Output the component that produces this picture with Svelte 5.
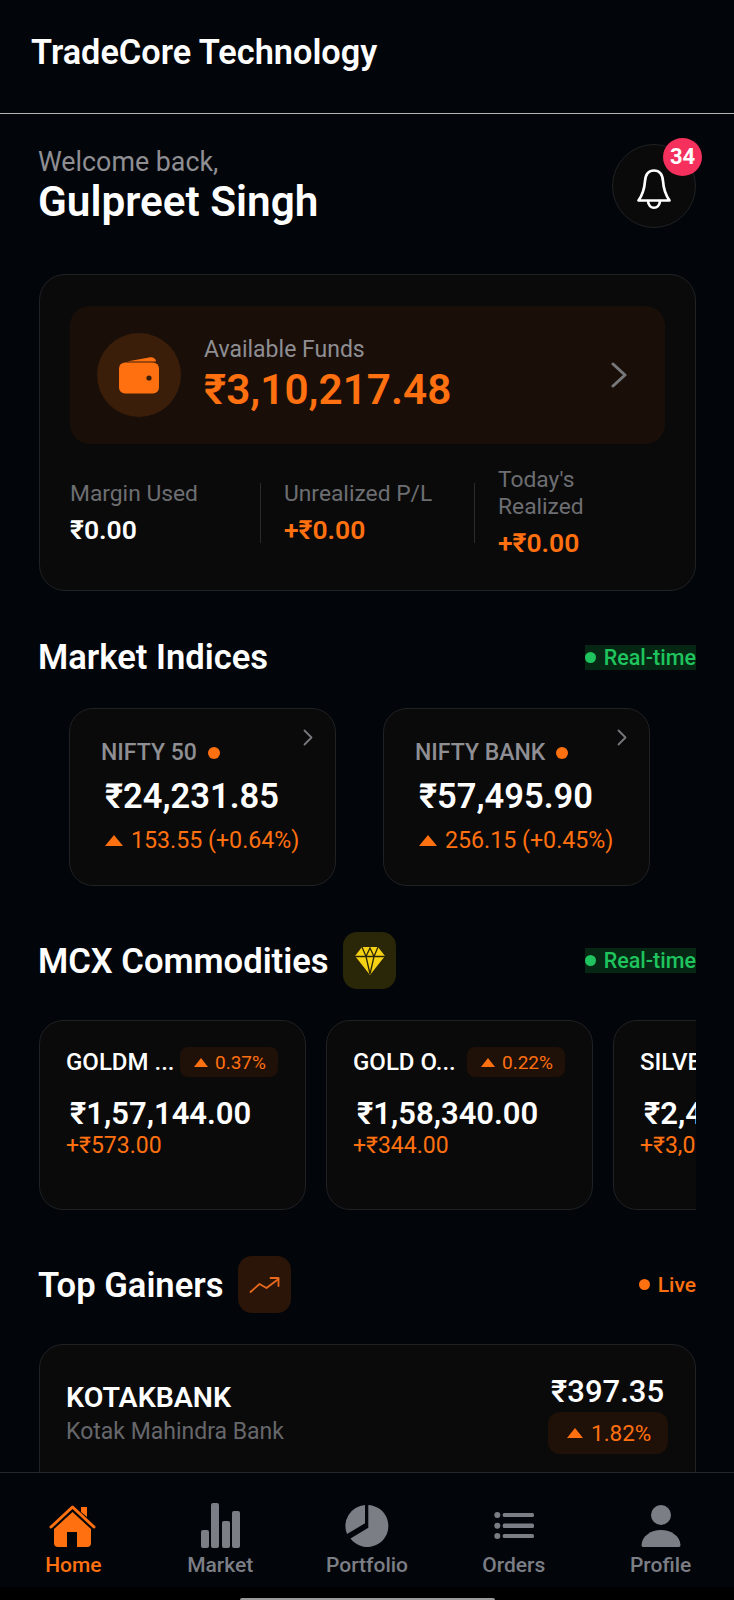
<script>
  const indices = [
    { name: 'NIFTY 50', value: '₹24,231.85', change: '153.55 (+0.64%)' },
    { name: 'NIFTY BANK', value: '₹57,495.90', change: '256.15 (+0.45%)' }
  ];
  const commodities = [
    { name: 'GOLDM ...', pct: '0.37%', value: '₹1,57,144.00', delta: '+₹573.00' },
    { name: 'GOLD O...', pct: '0.22%', value: '₹1,58,340.00', delta: '+₹344.00' },
    { name: 'SILVER...', pct: '1.24%', value: '₹2,41,850.00', delta: '+₹3,020.00' }
  ];
</script>

<div class="phone">
  <header class="top"><h1>TradeCore Technology</h1></header>

  <main class="content">
    <section class="greet">
      <div>
        <p class="welcome">Welcome back,</p>
        <p class="user">Gulpreet Singh</p>
      </div>
      <div class="bell">
        <svg width="40" height="44" viewBox="0 0 40 44" fill="none" stroke="#fff" stroke-width="2.700" stroke-linejoin="round" stroke-linecap="round">
          <path d="M20 3.500C14 3.500 11.500 8 11 14C10.500 22 9 27 4.500 33.500H35.500C31 27 29.500 22 29 14C28.500 8 26 3.500 20 3.500Z" />
          <path d="M14 34C14.500 43 25.500 43 26 34" />
        </svg>
        <span class="badge">34</span>
      </div>
    </section>

    <section class="card funds">
      <div class="funds-main">
        <div class="wallet">
          <svg width="40" height="38" viewBox="0 0 40 38">
            <path fill="#ff7010" d="M8 5.500L30 1.500C34 .8 37 2.500 37 5.500H8Z" />
            <rect fill="#ff7010" x="0" y="6.500" width="40" height="31" rx="6" />
            <circle fill="#3a1e0a" cx="30" cy="22" r="2.600" />
          </svg>
        </div>
        <div class="funds-text">
          <p class="funds-label">Available Funds</p>
          <p class="funds-value">₹3,10,217.48</p>
        </div>
        <svg class="funds-arrow" width="16" height="26" viewBox="0 0 16 26" fill="none" stroke="#77787c" stroke-width="3" stroke-linecap="round" stroke-linejoin="round"><path d="M2 2L14 13L2 24" /></svg>
      </div>
      <div class="stats">
        <div class="stat first">
          <p class="stat-label">Margin Used</p>
          <p class="stat-value">₹0.00</p>
        </div>
        <div class="vline"></div>
        <div class="stat second">
          <p class="stat-label">Unrealized P/L</p>
          <p class="stat-value orange">+₹0.00</p>
        </div>
        <div class="vline"></div>
        <div class="stat third">
          <p class="stat-label">Today's<br />Realized</p>
          <p class="stat-value orange">+₹0.00</p>
        </div>
      </div>
    </section>

    <section class="head plain">
      <h2>Market Indices</h2>
      <span class="tag realtime"><i></i>Real-time</span>
    </section>
    <div class="index-row">
      {#each indices as item}
        <article class="card index">
          <svg class="index-arrow" width="10" height="17" viewBox="0 0 10 17" fill="none" stroke="#77787c" stroke-width="1.800" stroke-linecap="round" stroke-linejoin="round"><path d="M1.500 1.500L8.500 8.500L1.500 15.500" /></svg>
          <p class="index-name">{item.name}<i></i></p>
          <p class="index-value">{item.value}</p>
          <p class="index-change"><span class="tri big"></span>{item.change}</p>
        </article>
      {/each}
    </div>

    <section class="head">
      <div class="head-left">
        <h2>MCX Commodities</h2>
        <span class="head-icon gem">
          <svg width="30" height="28" viewBox="0 0 30 28">
            <path fill="#f6d215" d="M7 0H23L30 9L15 28L0 9Z" />
            <path fill="none" stroke="#2a2608" stroke-width="1.300" d="M0 9.500H30M7 0L11 9.500L15 1L19 9.500L23 0M11 9.500L15 27L19 9.500" />
          </svg>
        </span>
      </div>
      <span class="tag realtime"><i></i>Real-time</span>
    </section>
    <div class="commodity-row">
      {#each commodities as c}
        <article class="card commodity">
          <div class="commodity-top">
            <p class="commodity-name">{c.name}</p>
            <span class="commodity-chip"><span class="tri small"></span>{c.pct}</span>
          </div>
          <p class="commodity-value">{c.value}</p>
          <p class="commodity-delta">{c.delta}</p>
        </article>
      {/each}
    </div>

    <section class="head">
      <div class="head-left">
        <h2>Top Gainers</h2>
        <span class="head-icon trend">
          <svg width="32" height="20" viewBox="0 0 32 20" fill="none" stroke="#e8691c" stroke-width="1.800" stroke-linecap="round" stroke-linejoin="round">
            <path d="M1.500 17L10.500 9L17.500 13L29.500 4" /><path d="M21.500 3H29.500V11" />
          </svg>
        </span>
      </div>
      <span class="tag live"><i></i>Live</span>
    </section>
    <article class="card gainer">
      <div>
        <p class="gainer-name">KOTAKBANK</p>
        <p class="gainer-sub">Kotak Mahindra Bank</p>
      </div>
      <div class="gainer-right">
        <p class="gainer-price">₹397.35</p>
        <span class="gainer-chip"><span class="tri big"></span>1.82%</span>
      </div>
    </article>
  </main>

  <nav class="nav">
    <div class="nav-item active">
      <svg width="48" height="48" viewBox="0 0 48 48">
        <path fill="none" stroke="#ff7010" stroke-width="3" stroke-linecap="round" stroke-linejoin="round" d="M2 24L23.500 4L45 24" />
        <path fill="#ff7010" d="M32 4H38V14L32 9Z" />
        <path fill="#ff7010" fill-rule="evenodd" d="M23.500 9L42 26V40Q42 44 38 44H9Q5 44 5 40V26ZM18 29V44H28V29Z" />
      </svg>
      <span>Home</span>
    </div>
    <div class="nav-item">
      <svg width="48" height="48" viewBox="0 0 48 48" fill="#7c7e85">
        <rect x="5" y="27" width="8" height="18" rx="2" />
        <rect x="15" y="0" width="8" height="45" rx="2" />
        <rect x="26" y="18" width="8" height="27" rx="2" />
        <rect x="36" y="8" width="8" height="37" rx="2" />
      </svg>
      <span>Market</span>
    </div>
    <div class="nav-item">
      <svg width="48" height="48" viewBox="0 0 48 48" fill="#7c7e85">
        <path d="M25.300 2A21 21 0 1 1 7.500 35.500L25.300 24.700Z" />
        <path d="M22 2V20.300L4 31A21 21 0 0 1 22 2Z" />
      </svg>
      <span>Portfolio</span>
    </div>
    <div class="nav-item">
      <svg width="48" height="48" viewBox="0 0 48 48" fill="#7c7e85">
        <circle cx="7.300" cy="12" r="3" /><rect x="12.700" y="10" width="31.300" height="4" rx="1.500" />
        <circle cx="7.300" cy="22.700" r="3" /><rect x="12.700" y="20.500" width="31.300" height="4.400" rx="1.500" />
        <circle cx="7.300" cy="33" r="3" /><rect x="12.700" y="31" width="31.300" height="4" rx="1.500" />
      </svg>
      <span>Orders</span>
    </div>
    <div class="nav-item">
      <svg width="48" height="48" viewBox="0 0 48 48" fill="#7c7e85">
        <circle cx="24" cy="12" r="10" />
        <path d="M4.500 42C5 33 14 27 24 27C34 27 43 33 43.500 42Q43.500 44 42 44H6Q4.500 44 4.500 42Z" />
      </svg>
      <span>Profile</span>
    </div>
  </nav>
  <div class="gesture"><div class="handle"></div></div>
</div>

<style>
  :global(body) {
    margin: 0;
    background: #02050a;
  }
  p, h1, h2 {
    margin: 0;
    font-weight: 400;
  }
  i {
    display: block;
    border-radius: 50%;
  }
  .phone {
    width: 734px;
    height: 1600px;
    display: flex;
    flex-direction: column;
    overflow: hidden;
    background: #02050a;
    font-family: Roboto, "Liberation Sans", sans-serif;
    color: #fff;
  }
  .top {
    height: 113px;
    flex: none;
    border-bottom: 1px solid #b5b5b5;
    display: flex;
    align-items: center;
    padding-left: 31px;
  }
  .top h1 {
    font-size: 34.300px;
    font-weight: 600;
    line-height: 40px;
    margin-top: -9px;
  }
  .content {
    flex: 1;
    min-height: 0;
    overflow: hidden;
    padding: 30px 38px 0 39px;
  }
  .greet {
    height: 84px;
    display: flex;
    justify-content: space-between;
  }
  .welcome {
    font-size: 26.800px;
    line-height: 34px;
    color: #8e8e93;
    margin: 1px 0 0 -1px;
  }
  .user {
    font-size: 42.300px;
    font-weight: 600;
    line-height: 46px;
    margin-left: -1px;
  }
  .bell {
    position: relative;
    width: 84px;
    height: 84px;
    box-sizing: border-box;
    border: 1px solid #1f2123;
    border-radius: 50%;
    background: #0a0a0a;
    display: flex;
    align-items: center;
    justify-content: center;
  }
  .bell svg {
    margin-top: 5px;
  }
  .badge {
    position: absolute;
    top: -7px;
    right: -7px;
    width: 39px;
    height: 38px;
    border-radius: 50%;
    background: #f5305c;
    color: #fff;
    font-size: 22px;
    font-weight: 700;
    line-height: 38px;
    text-align: center;
  }
  .card {
    box-sizing: border-box;
    background: #0a0a0a;
    border: 1px solid #1f2123;
  }
  .funds {
    margin-top: 46px;
    height: 317px;
    border-radius: 26px;
    padding: 31px 30px;
  }
  .funds-main {
    height: 138px;
    border-radius: 20px;
    background: #1a0f08;
    display: flex;
    align-items: center;
    padding: 0 26px 0 27px;
  }
  .wallet {
    width: 84px;
    height: 84px;
    flex: none;
    border-radius: 50%;
    background: #3a1e0a;
    display: flex;
    align-items: center;
    justify-content: center;
  }
  .funds-text {
    flex: 1;
    margin: -2px 0 0 23px;
  }
  .funds-label {
    font-size: 23px;
    line-height: 30px;
    color: #8e8e93;
  }
  .funds-value {
    font-size: 42.300px;
    font-weight: 600;
    line-height: 48px;
    color: #ff7010;
    margin-top: 1px;
  }
  .funds-arrow {
    margin-right: 12px;
  }
  .stats {
    margin-top: 22px;
    display: flex;
    align-items: center;
    height: 93px;
  }
  .stat.first { width: 190px; }
  .stat.second { width: 190px; padding-left: 23px; }
  .stat.third { padding-left: 23px; }
  .vline {
    width: 1px;
    height: 60px;
    background: #2a2b2d;
    flex: none;
  }
  .stat-label {
    font-size: 22.800px;
    line-height: 27px;
    color: #6d6e72;
  }
  .stat-value {
    font-size: 26.500px;
    font-weight: 600;
    line-height: 32px;
    margin-top: 7px;
    color: #fff;
  }
  .stat .orange { color: #ff7010; }
  .head {
    margin-top: 46px;
    display: flex;
    align-items: center;
    justify-content: space-between;
    min-height: 57px;
  }
  .head.plain {
    min-height: 40px;
  }
  .head-left {
    display: flex;
    align-items: center;
    gap: 14.500px;
  }
  h2 {
    font-size: 34.600px;
    font-weight: 600;
    line-height: 40px;
    margin-left: -1px;
  }
  .head-icon {
    width: 53px;
    height: 57px;
    border-radius: 14px;
    display: flex;
    align-items: center;
    justify-content: center;
  }
  .gem { background: #2a2608; }
  .trend { background: #2a1508; }
  .tag {
    display: flex;
    align-items: center;
    height: 25px;
    font-size: 21px;
    font-weight: 500;
    gap: 8px;
    white-space: nowrap;
  }
  .tag i {
    width: 11px;
    height: 11px;
    flex: none;
  }
  .realtime {
    background: #062713;
    color: #1fc45e;
    font-size: 21.500px;
  }
  .realtime i { background: #1fc45e; }
  .live { color: #ff7010; }
  .live i { background: #ff7010; }
  .index-row {
    margin-top: 31px;
    margin-bottom: 1px;
    padding-left: 30px;
    display: flex;
    gap: 47px;
  }
  .index {
    position: relative;
    width: 267px;
    height: 178px;
    flex: none;
    border-radius: 24px;
    padding: 30px 0 0 31px;
  }
  .index-arrow {
    position: absolute;
    top: 20px;
    right: 22px;
  }
  .index-name {
    display: flex;
    align-items: center;
    font-size: 23px;
    font-weight: 500;
    line-height: 28px;
    color: #8e8e93;
  }
  .index-name i {
    width: 12px;
    height: 12px;
    background: #ff7010;
    margin-left: 11px;
  }
  .index-value {
    font-size: 34.500px;
    font-weight: 600;
    line-height: 40px;
    margin: 9px 0 0 4px;
  }
  .index-change {
    display: flex;
    align-items: center;
    margin: 10px 0 0 4px;
    font-size: 23.200px;
    line-height: 28px;
    color: #ff7010;
  }
  .tri {
    display: block;
    flex: none;
    width: 0;
    height: 0;
    border-style: solid;
    border-color: transparent transparent #ff7010;
  }
  .tri.big {
    border-width: 0 9px 11px;
    margin-right: 8px;
  }
  .tri.small {
    border-width: 0 7px 9px;
    margin-right: 7px;
  }
  .commodity-row {
    margin-top: 31px;
    display: flex;
    gap: 20px;
    overflow: hidden;
  }
  .commodity {
    width: 267px;
    height: 190px;
    flex: none;
    border-radius: 24px;
    padding: 26px 0 0 26px;
  }
  .commodity-top {
    display: flex;
    align-items: center;
    height: 30px;
  }
  .commodity-name {
    width: 114px;
    flex: none;
    font-size: 24px;
    font-weight: 500;
    white-space: nowrap;
  }
  .commodity-chip {
    display: flex;
    align-items: center;
    height: 30px;
    width: 98px;
    box-sizing: border-box;
    padding-left: 14px;
    border-radius: 8px;
    background: #1f1008;
    color: #ff7010;
    font-size: 19px;
  }
  .commodity-value {
    font-size: 31px;
    font-weight: 600;
    line-height: 36px;
    margin: 19px 0 0 4px;
    white-space: nowrap;
  }
  .commodity-delta {
    font-size: 23px;
    line-height: 28px;
    color: #ff7010;
  }
  .gainer {
    margin-top: 31px;
    height: 170px;
    border-radius: 24px;
    padding: 29px 27px 0 26px;
    display: flex;
    justify-content: space-between;
    align-items: flex-start;
  }
  .gainer-name {
    font-size: 28.500px;
    font-weight: 600;
    line-height: 34px;
    margin-top: 7px;
  }
  .gainer-sub {
    font-size: 23px;
    line-height: 34px;
    color: #66676b;
  }
  .gainer-right {
    display: flex;
    flex-direction: column;
    align-items: flex-end;
  }
  .gainer-price {
    font-size: 31px;
    font-weight: 500;
    line-height: 36px;
    margin-right: 4px;
  }
  .gainer-chip {
    display: flex;
    align-items: center;
    height: 42px;
    width: 120px;
    margin-top: 2px;
    box-sizing: border-box;
    padding-left: 19px;
    border-radius: 12px;
    background: #1f1008;
    color: #ff7010;
    font-size: 22.500px;
  }
  .gainer-chip .tri {
    border-width: 0 8px 10px;
    margin-right: 8px;
  }
  .nav {
    flex: none;
    height: 115px;
    box-sizing: border-box;
    border-top: 1px solid #25272a;
    padding-top: 30px;
    display: flex;
    background: #02050a;
  }
  .nav-item {
    flex: 1;
    display: flex;
    flex-direction: column;
    align-items: center;
    font-size: 21px;
    font-weight: 500;
    line-height: 28px;
    color: #7c7e85;
  }
  .nav-item.active { color: #ff7010; }
  .gesture {
    flex: none;
    height: 13px;
    background: #000;
    display: flex;
    align-items: flex-end;
    justify-content: center;
  }
  .handle {
    width: 255px;
    height: 2px;
    background: #9a9a9a;
    border-radius: 2px 2px 0 0;
  }
</style>
